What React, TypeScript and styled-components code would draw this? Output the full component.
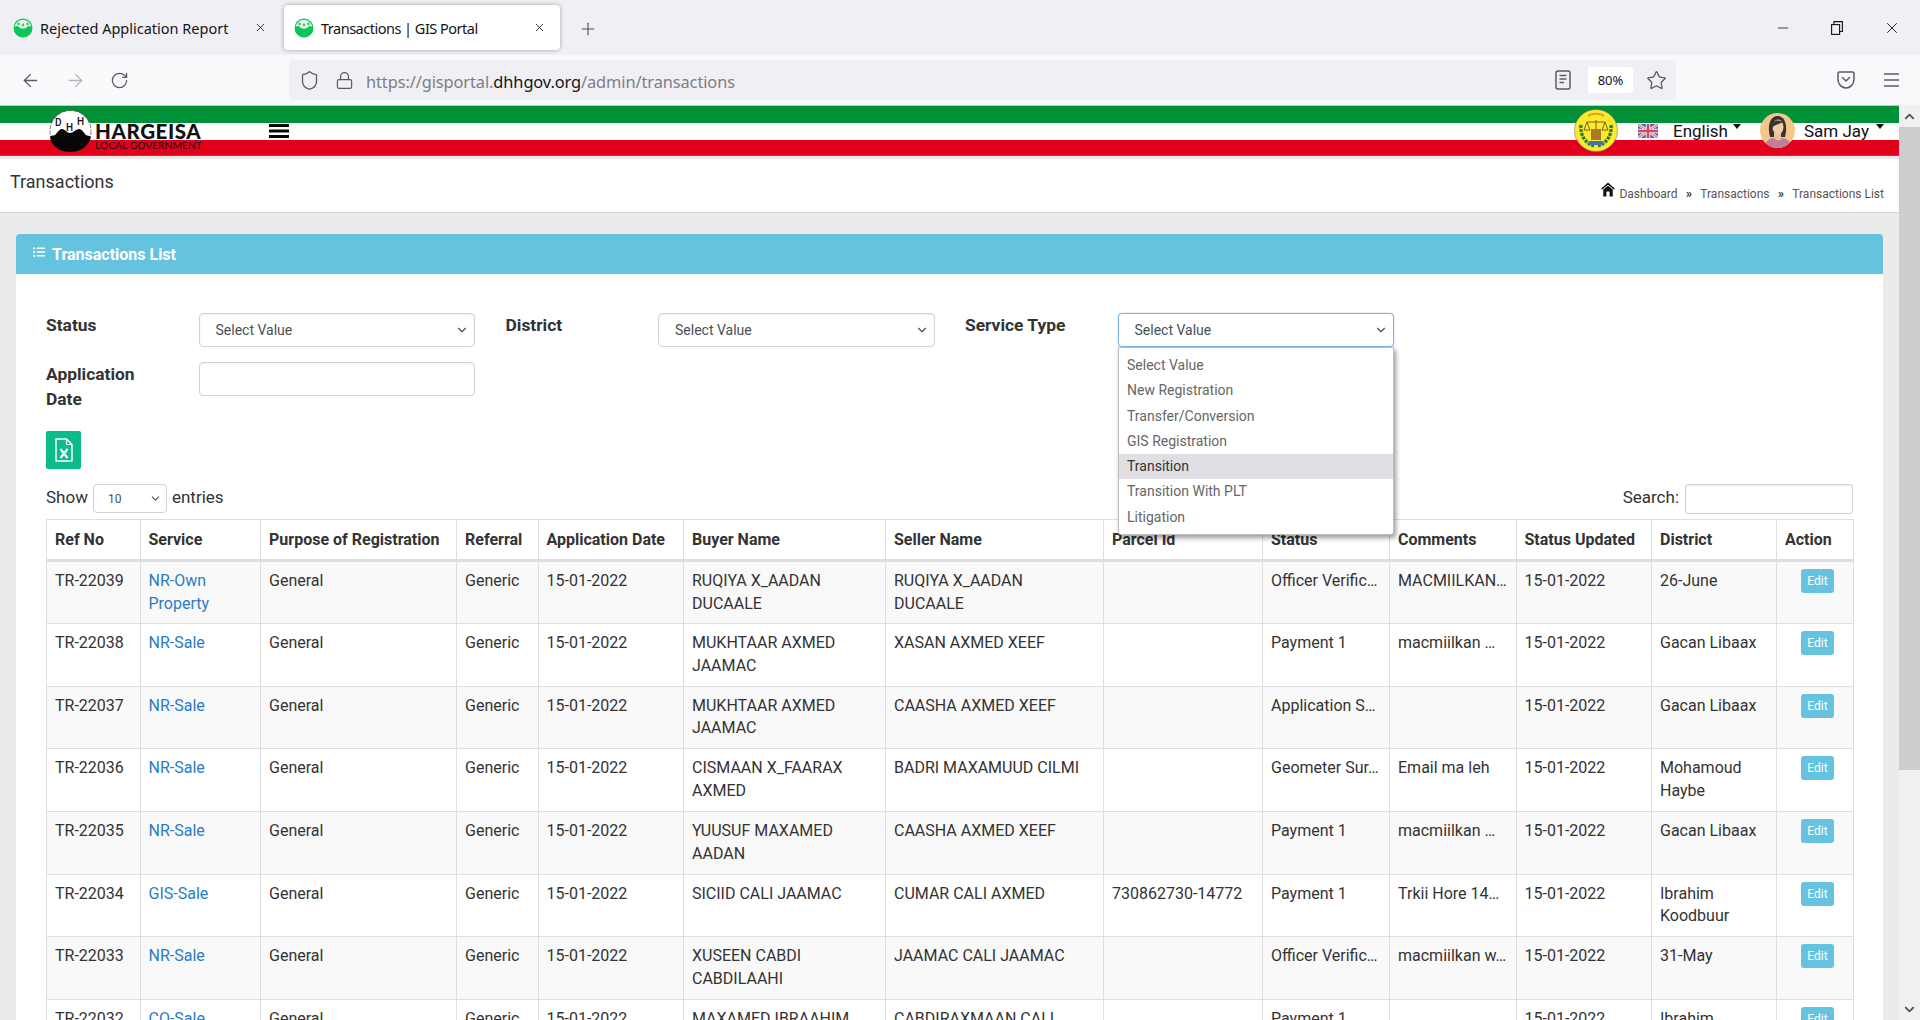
import { ArrowLeft, ArrowRight, ChevronDown, ChevronUp, Lock, Minus, Plus, RotateCw, Shield, Star, X } from 'lucide-react';
import { FaListUl } from 'react-icons/fa';
import styled, { createGlobalStyle } from 'styled-components';

type Row = {
  ref: string;
  service: string;
  buyer: string;
  seller: string;
  parcel?: string;
  status: string;
  comments?: string;
  district: string;
};

const GlobalStyle = createGlobalStyle`
  html, body {
    margin: 0;
    height: 100%;
    overflow: hidden;
    background: #ebebeb;
  }
  #root {
    height: 100%;
  }
  * {
    box-sizing: border-box;
  }
`;

const Shell = styled.div`
  height: 100vh;
  display: flex;
  flex-direction: column;
  font-family: Roboto, 'Liberation Sans', sans-serif;
  color: #333;
`;

const TabStrip = styled.div`
  height: 55px;
  flex: none;
  display: flex;
  align-items: flex-start;
  background: #f0f0f4;
  font-family: 'Noto Sans', 'Open Sans', sans-serif;
  color: #15141a;
`;

const Tab = styled.div<{ $active?: boolean }>`
  width: 276px;
  height: 45px;
  margin-top: 5px;
  margin-left: ${({ $active }) => ($active ? '0' : '8px')};
  padding: 0 ${({ $active }) => ($active ? '14px' : '17px')} 0 ${({ $active }) => ($active ? '10px' : '5px')};
  display: flex;
  align-items: center;
  gap: 7px;
  border-radius: 4px;
  background: ${({ $active }) => ($active ? '#fff' : 'transparent')};
  box-shadow: ${({ $active }) => ($active ? '0 0 4px rgba(0, 0, 0, 0.35)' : 'none')};
  font-size: 14.5px;
  white-space: nowrap;
`;

const TabTitle = styled.span<{ $tight?: boolean }>`
  flex: 1;
  letter-spacing: ${({ $tight }) => ($tight ? '-0.5px' : '0')};
`;

const NewTab = styled.div`
  margin: 19px 0 0 18px;
  color: #4a4a50;
  line-height: 0;
`;

const WindowControls = styled.div`
  margin-left: auto;
  height: 55px;
  padding-right: 19px;
  display: flex;
  align-items: center;
  gap: 40px;
  color: #111;
`;

const Toolbar = styled.div`
  height: 50px;
  flex: none;
  padding: 0 21px 0 20px;
  display: flex;
  align-items: center;
  background: #f9f9fb;
  color: #5b5b66;
`;

const NavButton = styled.div<{ $muted?: boolean }>`
  width: 45px;
  line-height: 0;
  color: ${({ $muted }) => ($muted ? '#b4b4ba' : '#5b5b66')};
`;

const UrlBar = styled.div`
  width: 1387px;
  height: 40px;
  margin-left: 134px;
  padding: 0 9px 0 10px;
  display: flex;
  align-items: center;
  border-radius: 4px;
  background: #f0f0f4;
`;

const UrlText = styled.div`
  margin: 2px 0 0 12px;
  font-family: 'Noto Sans', 'Open Sans', sans-serif;
  font-size: 16.4px;
  letter-spacing: -0.1px;
  color: #7d7d85;
  b {
    font-weight: 400;
    color: #15141a;
  }
`;

const UrlTools = styled.div`
  margin-left: auto;
  display: flex;
  align-items: center;
`;

const ZoomLevel = styled.div`
  width: 45px;
  height: 26px;
  margin: 0 13px 0 17px;
  display: flex;
  align-items: center;
  justify-content: center;
  border-radius: 3px;
  background: #fff;
  font-family: 'Noto Sans', sans-serif;
  font-size: 13px;
  color: #15141a;
`;

const ToolbarEnd = styled.div`
  margin-left: auto;
  display: flex;
  align-items: center;
  gap: 29px;
`;

const Viewport = styled.div`
  flex: 1;
  min-height: 0;
  display: flex;
`;

const Page = styled.div`
  flex: 1;
  min-width: 0;
  overflow: hidden;
  background: #ebebeb;
`;

const Scrollbar = styled.div`
  width: 21px;
  flex: none;
  display: flex;
  flex-direction: column;
  align-items: center;
  background: #f0f0f0;
  color: #555;
`;

const ScrollThumb = styled.div`
  width: 100%;
  height: 643px;
  background: #cdcdcd;
`;

const ScrollButton = styled.div`
  height: 22px;
  display: flex;
  align-items: center;
  justify-content: center;
`;

const ScrollDown = styled(ScrollButton)`
  margin-top: auto;
`;

const FlagHeader = styled.header`
  height: 51px;
  padding: 0 15px 0 49px;
  display: flex;
  align-items: center;
  background: linear-gradient(
    #c8c8c8 0 1px,
    #009138 1px 18px,
    #fff 18px 35px,
    #e2001a 35px 50px,
    #009138 50px 51px
  );
`;

const Brand = styled.div`
  display: flex;
  align-items: center;
  gap: 3px;
  width: 220px;
`;

const BrandText = styled.div`
  display: flex;
  flex-direction: column;
  margin-top: 12px;
  color: #111;
  font-family: Lato, sans-serif;
`;

const BrandName = styled.span`
  font-size: 20.5px;
  font-weight: 900;
  line-height: 18px;
  letter-spacing: 0.6px;
`;

const BrandSub = styled.span`
  font-size: 10.3px;
  line-height: 11px;
`;

const HeaderRight = styled.div`
  margin-left: auto;
  display: flex;
  align-items: center;
`;

const HeaderMenu = styled.span<{ $gap: number }>`
  display: inline-flex;
  align-items: flex-start;
  margin-top: 1px;
  color: #111;
  font-size: 17px;
  line-height: 20px;
  &::after {
    content: '';
    margin: 3px 0 0 ${({ $gap }) => $gap}px;
    border-top: 5px solid #111;
    border-left: 4px solid transparent;
    border-right: 4px solid transparent;
    height: 0;
  }
`;

const PageTitleBar = styled.div`
  height: 54px;
  margin-top: 3px;
  padding: 12px 15px 0 10px;
  display: flex;
  justify-content: space-between;
  background: #fff;
  border-bottom: 1px solid #d8d8d8;
`;

const PageTitle = styled.h1`
  margin: 0;
  font-size: 18px;
  font-weight: 400;
  line-height: 21px;
`;

const Breadcrumb = styled.div`
  margin-top: 12px;
  display: flex;
  align-items: flex-end;
  gap: 4px;
  height: 18px;
  font-size: 12px;
  line-height: 14px;
  color: #555;
`;

const Crumbs = styled.span`
  i {
    font-style: normal;
    font-weight: 700;
    margin: 0 8.4px;
    color: #333;
  }
`;

const Content = styled.div`
  padding: 21px 16px 0;
`;

const Card = styled.section`
  background: #fff;
  border-radius: 4px 4px 0 0;
`;

const CardHeader = styled.div`
  height: 40px;
  padding: 0 16px 0 17px;
  display: flex;
  align-items: center;
  gap: 7px;
  border-radius: 4px 4px 0 0;
  background: #66c3df;
  color: #fff;
  font-size: 16px;
  font-weight: 700;
`;

const CardBody = styled.div`
  position: relative;
  padding: 39px 30px 0;
`;

const Filters = styled.div`
  display: flex;
  flex-wrap: wrap;
  column-gap: 30.5px;
  row-gap: 15px;
`;

const FilterGroup = styled.div`
  width: 429px;
  display: grid;
  grid-template-columns: 152.5px 276.5px;
`;

const FilterLabel = styled.label`
  font-size: 17.4px;
  font-weight: 700;
  line-height: 25px;
  width: 110px;
`;

const SelectBox = styled.div<{ $focus?: boolean }>`
  height: 34px;
  padding: 0 5px 0 16px;
  display: flex;
  align-items: center;
  justify-content: space-between;
  border: 1px solid ${({ $focus }) => ($focus ? '#7fb6e6' : '#ced4da')};
  border-radius: 4px;
  background: #fff;
  box-shadow: ${({ $focus }) => ($focus ? '0 0 2px rgba(90, 160, 230, 0.6)' : 'inset 0 1px 2px rgba(0, 0, 0, 0.08)')};
  color: #495057;
  font-size: 14px;
`;

const DateInput = styled.div`
  height: 34px;
  border: 1px solid #ced4da;
  border-radius: 4px;
  background: #fff;
  box-shadow: inset 0 1px 2px rgba(0, 0, 0, 0.06);
`;

const ServiceMenu = styled.ul`
  position: absolute;
  z-index: 5;
  top: 73px;
  left: 1102px;
  width: 276px;
  height: 188px;
  margin: 0;
  padding: 5px 0 0;
  list-style: none;
  background: #fff;
  border: 1px solid #bdbdbd;
  border-radius: 0 0 3px 3px;
  box-shadow: 2px 3px 5px rgba(0, 0, 0, 0.4);
  color: #666;
  font-size: 14px;
`;

const ServiceOption = styled.li<{ $hover?: boolean }>`
  height: 25.3px;
  padding-left: 8px;
  line-height: 25px;
  background: ${({ $hover }) => ($hover ? '#e0dfe4' : 'transparent')};
  color: ${({ $hover }) => ($hover ? '#333' : '#666')};
`;

const ExcelButton = styled.button`
  width: 35px;
  height: 38px;
  margin-top: 19px;
  padding: 0;
  display: flex;
  align-items: center;
  justify-content: center;
  border: 0;
  border-radius: 2px;
  background: #0bbb8c;
`;

const TableTools = styled.div`
  height: 29px;
  margin: 15px 0 6px;
  display: flex;
  align-items: center;
  justify-content: space-between;
  font-size: 17px;
  line-height: 26px;
`;

const ToolGroup = styled.label`
  display: flex;
  align-items: flex-start;
  gap: 5px;
`;

const LengthSelect = styled.div`
  width: 74px;
  height: 29px;
  padding: 0 4px 0 14px;
  display: flex;
  align-items: center;
  justify-content: space-between;
  border: 1px solid #ced4da;
  border-radius: 4px;
  background: #fff;
  font-size: 12px;
  color: #495057;
`;

const SearchInput = styled.div`
  width: 168px;
  height: 30px;
  margin-left: 1px;
  border: 1px solid #ced4da;
  border-radius: 3px;
  box-shadow: inset 0 1px 2px rgba(0, 0, 0, 0.08);
`;

const DataTable = styled.table`
  width: 1807px;
  table-layout: fixed;
  border-collapse: collapse;
  font-size: 16px;
  line-height: 22.5px;
`;

const HeadCell = styled.th`
  height: 41px;
  padding: 1px 8px 0;
  text-align: left;
  font-weight: 700;
  white-space: nowrap;
  border: 1px solid #dedede;
  border-bottom-width: 3px;
`;

const BodyRow = styled.tr<{ $striped: boolean }>`
  height: 62.7px;
  background: ${({ $striped }) => ($striped ? '#f9f9f9' : '#fff')};
`;

const Cell = styled.td<{ $nowrap?: boolean }>`
  padding: 8px;
  vertical-align: top;
  border: 1px solid #dedede;
  white-space: ${({ $nowrap }) => ($nowrap ? 'nowrap' : 'normal')};
  overflow: hidden;
`;

const ActionCell = styled(Cell)`
  padding: 7px 19px 0 0;
  text-align: right;
`;

const ServiceLink = styled.a`
  color: #2a7cc4;
  text-decoration: none;
`;

const EditButton = styled.button`
  width: 33px;
  height: 24px;
  padding: 0;
  display: inline-block;
  vertical-align: top;
  border: 0;
  border-radius: 3px;
  background: #66c3df;
  color: #fff;
  font-family: Roboto, sans-serif;
  font-size: 12px;
`;

const columnWidths = [93.5, 120.5, 196, 81.5, 145.5, 202, 218, 159, 127, 126.5, 135.5, 125, 77];

const headings = [
  'Ref No',
  'Service',
  'Purpose of Registration',
  'Referral',
  'Application Date',
  'Buyer Name',
  'Seller Name',
  'Parcel Id',
  'Status',
  'Comments',
  'Status Updated',
  'District',
  'Action',
];

const serviceTypes = [
  'Select Value',
  'New Registration',
  'Transfer/Conversion',
  'GIS Registration',
  'Transition',
  'Transition With PLT',
  'Litigation',
];

const rows: Row[] = [
  { ref: 'TR-22039', service: 'NR-Own Property', buyer: 'RUQIYA X_AADAN DUCAALE', seller: 'RUQIYA X_AADAN DUCAALE', status: 'Officer Verific…', comments: 'MACMIILKAN…', district: '26-June' },
  { ref: 'TR-22038', service: 'NR-Sale', buyer: 'MUKHTAAR AXMED JAAMAC', seller: 'XASAN AXMED XEEF', status: 'Payment 1', comments: 'macmiilkan …', district: 'Gacan Libaax' },
  { ref: 'TR-22037', service: 'NR-Sale', buyer: 'MUKHTAAR AXMED JAAMAC', seller: 'CAASHA AXMED XEEF', status: 'Application S…', district: 'Gacan Libaax' },
  { ref: 'TR-22036', service: 'NR-Sale', buyer: 'CISMAAN X_FAARAX AXMED', seller: 'BADRI MAXAMUUD CILMI', status: 'Geometer Sur…', comments: 'Email ma leh', district: 'Mohamoud Haybe' },
  { ref: 'TR-22035', service: 'NR-Sale', buyer: 'YUUSUF MAXAMED AADAN', seller: 'CAASHA AXMED XEEF', status: 'Payment 1', comments: 'macmiilkan …', district: 'Gacan Libaax' },
  { ref: 'TR-22034', service: 'GIS-Sale', buyer: 'SICIID CALI JAAMAC', seller: 'CUMAR CALI AXMED', parcel: '730862730-14772', status: 'Payment 1', comments: 'Trkii Hore 14…', district: 'Ibrahim Koodbuur' },
  { ref: 'TR-22033', service: 'NR-Sale', buyer: 'XUSEEN CABDI CABDILAAHI', seller: 'JAAMAC CALI JAAMAC', status: 'Officer Verific…', comments: 'macmiilkan w…', district: '31-May' },
  { ref: 'TR-22032', service: 'CO-Sale', buyer: 'MAXAMED IBRAAHIM CALI', seller: 'CABDIRAXMAAN CALI XASAN', status: 'Payment 1', district: 'Ibrahim Koodbuur' },
];

const Favicon = () => (
  <svg width="20" height="20" viewBox="0 0 20 20" style={{ flex: 'none' }}>
    <circle cx="10" cy="10" r="9.5" fill="#0cc65a" />
    <path d="M1.8 9.5 C3 7 5 8 6.5 9.5 C8 11 12 11 13.5 9.5 C15 8 17 7 18.2 9.5 C18 4.5 14 2 10 2 C6 2 2 4.5 1.8 9.5Z" fill="#eef9f1" />
    <circle cx="5.5" cy="6" r="1.4" fill="#55bd80" />
    <circle cx="10" cy="7" r="1.4" fill="#55bd80" />
    <circle cx="14.5" cy="6" r="1.4" fill="#55bd80" />
  </svg>
);

const LogoMark = () => (
  <svg width="43" height="42" viewBox="0 0 43 42" style={{ flex: 'none' }}>
    <circle cx="21.5" cy="21" r="20.5" fill="#fff" stroke="#444" strokeWidth="0.7" strokeDasharray="4 1.5" />
    <path d="M1 27 C3 24 5 27 7 24 C9 21 11 19 13 19 C16 19 18 23 21 23 C24 23 27 19 30 19 C33 19 35 23 37 25 C38 26 40 25 42 27 C40 36 31 42 21.5 42 C11 42 2 36 1 27Z" fill="#060606" />
    <text x="6" y="16" fontSize="10" fontWeight="500" fontFamily="Roboto, sans-serif" fill="#111">D</text>
    <text x="17" y="21" fontSize="10" fontWeight="500" fontFamily="Roboto, sans-serif" fill="#111">H</text>
    <text x="28" y="15" fontSize="10" fontWeight="500" fontFamily="Roboto, sans-serif" fill="#111">H</text>
  </svg>
);

const MenuBars = () => (
  <svg width="20" height="14" viewBox="0 0 20 14" style={{ flex: 'none' }}>
    <rect width="20" height="3" fill="#060606" />
    <rect y="5.5" width="20" height="3" fill="#060606" />
    <rect y="11" width="20" height="3" fill="#060606" />
  </svg>
);

const Emblem = () => (
  <svg width="44" height="43" viewBox="0 0 44 43">
    <ellipse cx="22" cy="21.5" rx="21.5" ry="21" fill="#fdea2c" stroke="#777" strokeWidth="0.6" />
    <path d="M7 16 C6 26 11 34 20 37" fill="none" stroke="#2f7d32" strokeWidth="3.4" strokeDasharray="3 1" />
    <path d="M37 16 C38 26 33 34 24 37" fill="none" stroke="#2f7d32" strokeWidth="3.4" strokeDasharray="3 1" />
    <path d="M13 13 H31 M22 11 V30 M13 13 L10 21 H16 Z M31 13 L28 21 H34 Z" fill="none" stroke="#77601c" strokeWidth="1" />
    <path d="M17 20 H27 V31 H17Z" fill="#a8792a" />
    <path d="M15 32 H29 V36 H15Z" fill="#3e74b8" />
    <path d="M14 7 C18 4 26 4 30 7" fill="none" stroke="#d9a41e" strokeWidth="2" />
  </svg>
);

const UkFlag = () => (
  <svg width="20" height="14" viewBox="0 0 20 14" style={{ marginLeft: 20, marginRight: 15 }}>
    <rect width="20" height="14" fill="#5265a8" />
    <path d="M0 0 L20 14 M20 0 L0 14" stroke="#efe6ea" strokeWidth="3" />
    <path d="M0 0 L20 14 M20 0 L0 14" stroke="#d35a6e" strokeWidth="1" />
    <path d="M10 0 V14 M0 7 H20" stroke="#efe6ea" strokeWidth="4.4" />
    <path d="M10 0 V14 M0 7 H20" stroke="#d4465f" strokeWidth="2.4" />
  </svg>
);

const Avatar = () => (
  <svg width="35" height="35" viewBox="0 0 35 35" style={{ marginLeft: 19, marginRight: 9 }}>
    <clipPath id="avatar-clip">
      <circle cx="17.5" cy="17.5" r="17.5" />
    </clipPath>
    <g clipPath="url(#avatar-clip)">
      <rect width="35" height="35" fill="#f5c68c" />
      <path d="M10 24 C7 13 10 3 17.5 3 C25 3 28 13 25 24Z" fill="#3a3130" />
      <path d="M14 20 H21 V26 H14Z" fill="#eabf95" />
      <ellipse cx="18" cy="14" rx="5.5" ry="7.5" fill="#f1cda6" />
      <path d="M12 15 C12 7 17 6 23 9 C20 11 15 11 12 15Z" fill="#3a3130" />
      <path d="M4 35 C5 27 11 25 14 25 C16 28 20 28 22 25 C25 25 31 27 32 35Z" fill="#c07f99" />
    </g>
  </svg>
);

const HomeIcon = () => (
  <svg width="14" height="15" viewBox="0 0 15 15" style={{ flex: 'none', marginBottom: 4 }}>
    <path d="M7.5 0 L15 6.6 L13.8 7.6 L7.5 2.3 L1.2 7.6 L0 6.6Z" fill="#111" />
    <path d="M2.4 7.6 L7.5 3.4 L12.6 7.6 V15 H9.2 V9.6 H5.8 V15 H2.4Z" fill="#111" />
  </svg>
);

const ExcelIcon = () => (
  <svg width="18" height="24" viewBox="0 0 18 24" fill="none">
    <path d="M1 1 H11.5 L17 6.5 V23 H1Z" stroke="#fff" strokeWidth="1.4" />
    <path d="M11.5 1 V6.5 H17" stroke="#fff" strokeWidth="1.2" />
    <path d="M5.5 11 L12.5 20 M12.5 11 L5.5 20" stroke="#fff" strokeWidth="2.2" />
  </svg>
);

const RestoreIcon = () => (
  <svg width="12" height="14" viewBox="0 0 12 14" fill="none" stroke="#111" strokeWidth="1.1">
    <rect x="0.6" y="3.6" width="8" height="9.8" />
    <path d="M3 3.5 V0.6 H11.4 V10.5 H8.7" />
  </svg>
);

const ReaderIcon = () => (
  <svg width="16" height="20" viewBox="0 0 16 20" fill="none" stroke="#5b5b66" strokeWidth="1.5">
    <rect x="1" y="1" width="14" height="18" rx="2" />
    <path d="M4.5 5.5 H11.5 M4.5 9 H11.5 M4.5 12.5 H9" />
  </svg>
);

const PocketIcon = () => (
  <svg width="18" height="20" viewBox="0 0 18 20" fill="none" stroke="#5b5b66" strokeWidth="1.5">
    <path d="M2.5 2 H15.5 A1.5 1.5 0 0 1 17 3.5 V9.5 C17 14.5 13 18 9 18 C5 18 1 14.5 1 9.5 V3.5 A1.5 1.5 0 0 1 2.5 2Z" />
    <path d="M5.5 7.5 L9 11 L12.5 7.5" strokeLinecap="round" />
  </svg>
);

const BurgerIcon = () => (
  <svg width="15" height="14" viewBox="0 0 15 14" fill="none" stroke="#5b5b66" strokeWidth="1.5">
    <path d="M0 1 H15 M0 7 H15 M0 13 H15" />
  </svg>
);

const App = () => {
  return (
    <Shell>
      <GlobalStyle />
      <TabStrip>
        <Tab>
          <Favicon />
          <TabTitle>Rejected Application Report</TabTitle>
          <X size={13} strokeWidth={1.5} />
        </Tab>
        <Tab $active>
          <Favicon />
          <TabTitle $tight>Transactions | GIS Portal</TabTitle>
          <X size={13} strokeWidth={1.5} />
        </Tab>
        <NewTab>
          <Plus size={20} strokeWidth={1.3} />
        </NewTab>
        <WindowControls>
          <Minus size={16} strokeWidth={1.2} />
          <RestoreIcon />
          <X size={18} strokeWidth={1.2} />
        </WindowControls>
      </TabStrip>
      <Toolbar>
        <NavButton>
          <ArrowLeft size={21} strokeWidth={1.5} />
        </NavButton>
        <NavButton $muted>
          <ArrowRight size={21} strokeWidth={1.5} />
        </NavButton>
        <NavButton>
          <RotateCw size={19} strokeWidth={1.6} />
        </NavButton>
        <UrlBar>
          <Shield size={21} strokeWidth={1.5} />
          <Lock size={19} strokeWidth={1.5} style={{ marginLeft: 15 }} />
          <UrlText>
            https://gisportal.<b>dhhgov.org</b>/admin/transactions
          </UrlText>
          <UrlTools>
            <ReaderIcon />
            <ZoomLevel>80%</ZoomLevel>
            <Star size={21} strokeWidth={1.5} />
          </UrlTools>
        </UrlBar>
        <ToolbarEnd>
          <PocketIcon />
          <BurgerIcon />
        </ToolbarEnd>
      </Toolbar>
      <Viewport>
        <Page>
          <FlagHeader>
            <Brand>
              <LogoMark />
              <BrandText>
                <BrandName>HARGEISA</BrandName>
                <BrandSub>LOCAL GOVERNMENT</BrandSub>
              </BrandText>
            </Brand>
            <MenuBars />
            <HeaderRight>
              <Emblem />
              <UkFlag />
              <HeaderMenu $gap={5}>English</HeaderMenu>
              <Avatar />
              <HeaderMenu $gap={7}>Sam Jay</HeaderMenu>
            </HeaderRight>
          </FlagHeader>
          <PageTitleBar>
            <PageTitle>Transactions</PageTitle>
            <Breadcrumb>
              <HomeIcon />
              <Crumbs>
                Dashboard<i>»</i>Transactions<i>»</i>Transactions List
              </Crumbs>
            </Breadcrumb>
          </PageTitleBar>
          <Content>
            <Card>
              <CardHeader>
                <FaListUl size={12} style={{ marginBottom: 4 }} />
                Transactions List
              </CardHeader>
              <CardBody>
                <Filters>
                  <FilterGroup>
                    <FilterLabel>Status</FilterLabel>
                    <SelectBox>
                      Select Value
                      <ChevronDown size={14} strokeWidth={2} />
                    </SelectBox>
                  </FilterGroup>
                  <FilterGroup>
                    <FilterLabel>District</FilterLabel>
                    <SelectBox>
                      Select Value
                      <ChevronDown size={14} strokeWidth={2} />
                    </SelectBox>
                  </FilterGroup>
                  <FilterGroup>
                    <FilterLabel>Service Type</FilterLabel>
                    <SelectBox $focus>
                      Select Value
                      <ChevronDown size={14} strokeWidth={2} />
                    </SelectBox>
                  </FilterGroup>
                  <FilterGroup>
                    <FilterLabel>Application Date</FilterLabel>
                    <DateInput />
                  </FilterGroup>
                </Filters>
                <ServiceMenu>
                  {serviceTypes.map((type) => (
                    <ServiceOption key={type} $hover={type === 'Transition'}>
                      {type}
                    </ServiceOption>
                  ))}
                </ServiceMenu>
                <ExcelButton aria-label='Export'>
                  <ExcelIcon />
                </ExcelButton>
                <TableTools>
                  <ToolGroup>
                    Show
                    <LengthSelect>
                      10
                      <ChevronDown size={13} strokeWidth={2} />
                    </LengthSelect>
                    entries
                  </ToolGroup>
                  <ToolGroup>
                    Search:
                    <SearchInput />
                  </ToolGroup>
                </TableTools>
                <DataTable>
                  <colgroup>
                    {columnWidths.map((width, index) => (
                      <col key={index} width={width} />
                    ))}
                  </colgroup>
                  <thead>
                    <tr>
                      {headings.map((heading) => (
                        <HeadCell key={heading}>{heading}</HeadCell>
                      ))}
                    </tr>
                  </thead>
                  <tbody>
                    {rows.map((row, index) => (
                      <BodyRow key={row.ref} $striped={index % 2 === 0}>
                        <Cell>{row.ref}</Cell>
                        <Cell>
                          <ServiceLink href='#'>{row.service}</ServiceLink>
                        </Cell>
                        <Cell>General</Cell>
                        <Cell>Generic</Cell>
                        <Cell>15-01-2022</Cell>
                        <Cell>{row.buyer}</Cell>
                        <Cell>{row.seller}</Cell>
                        <Cell>{row.parcel}</Cell>
                        <Cell $nowrap>{row.status}</Cell>
                        <Cell $nowrap>{row.comments}</Cell>
                        <Cell>15-01-2022</Cell>
                        <Cell>{row.district}</Cell>
                        <ActionCell>
                          <EditButton>Edit</EditButton>
                        </ActionCell>
                      </BodyRow>
                    ))}
                  </tbody>
                </DataTable>
              </CardBody>
            </Card>
          </Content>
        </Page>
        <Scrollbar>
          <ScrollButton>
            <ChevronUp size={15} strokeWidth={3} />
          </ScrollButton>
          <ScrollThumb />
          <ScrollDown>
            <ChevronDown size={15} strokeWidth={3} />
          </ScrollDown>
        </Scrollbar>
      </Viewport>
    </Shell>
  );
};

export default App;
